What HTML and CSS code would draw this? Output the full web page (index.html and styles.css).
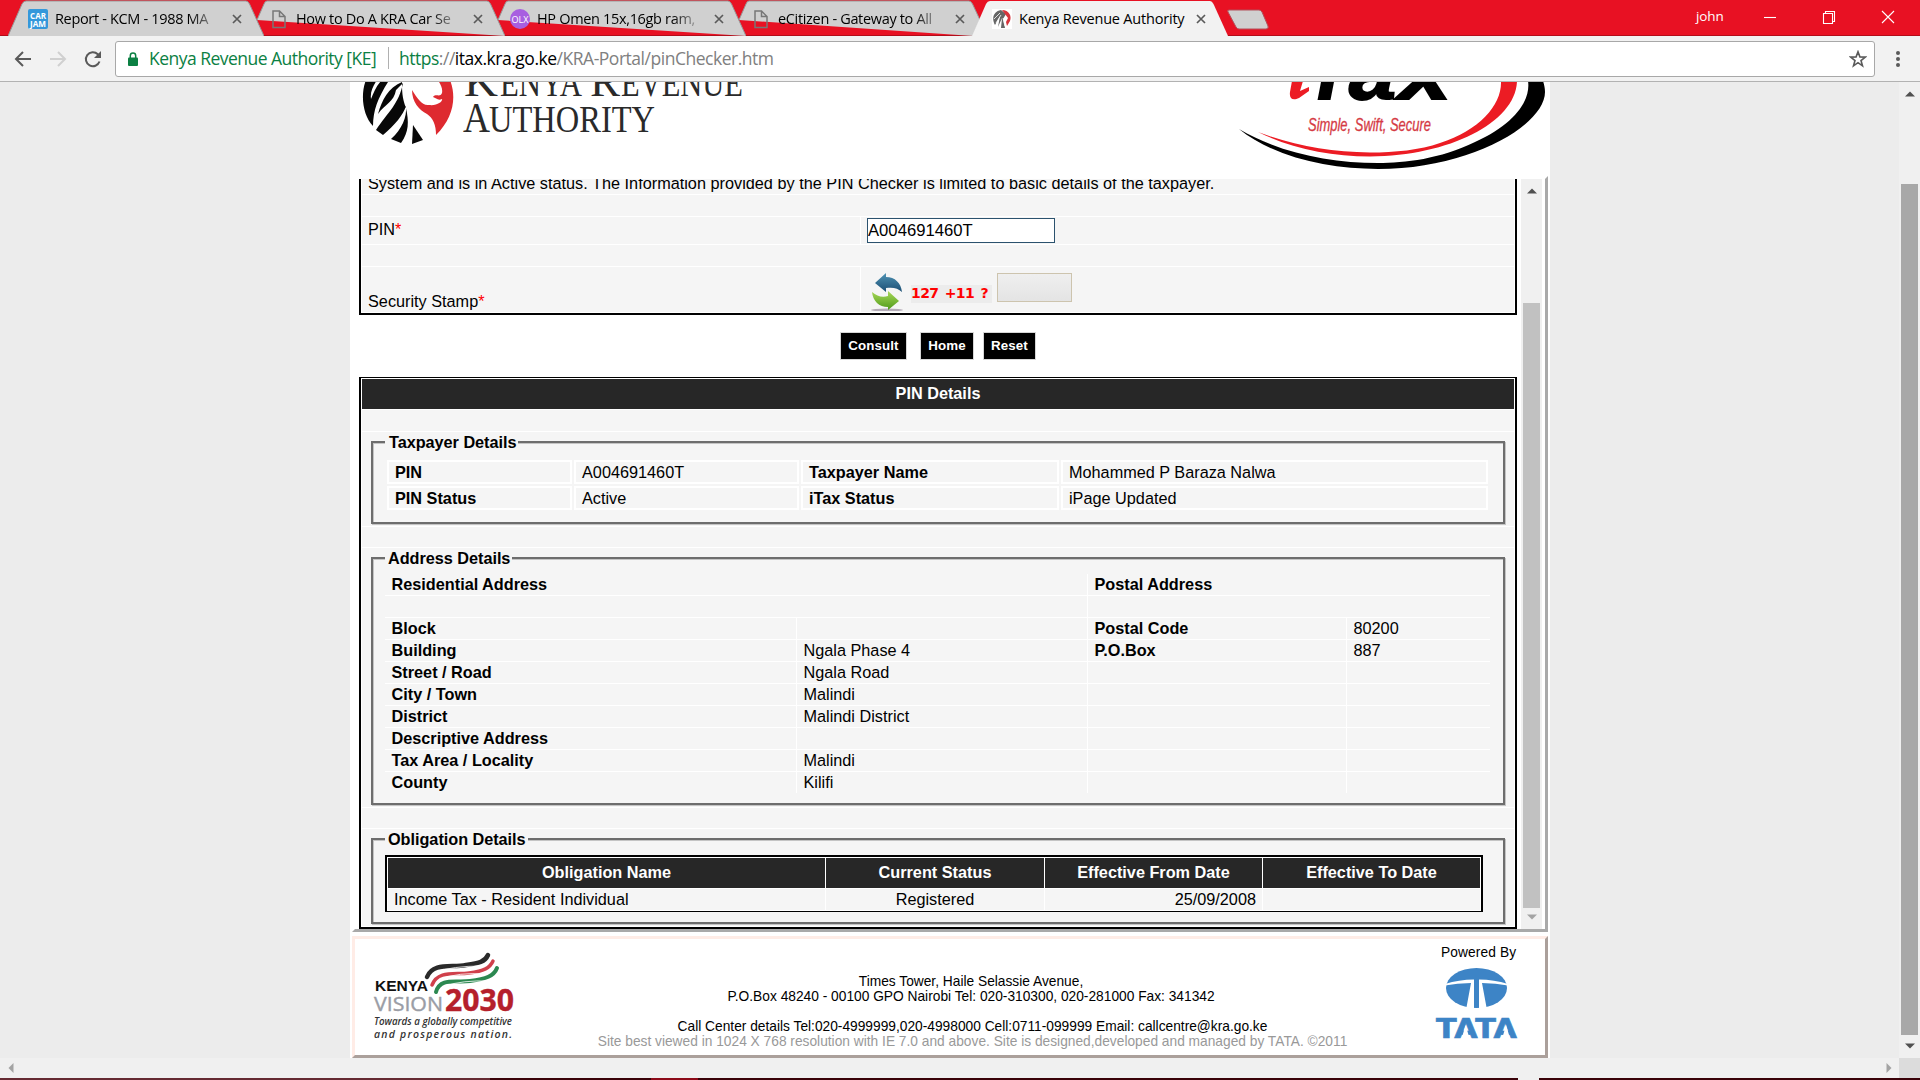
FILE: index.html
```html
<!DOCTYPE html>
<html lang="en">
<head>
<meta charset="utf-8">
<title>Kenya Revenue Authority</title>
<link rel="stylesheet" href="styles.css">
</head>
<body>
<div class="window">
  <header class="tabstrip">
    <div class="tabs">
      <div class="tab">
        <svg class="tab-shape" viewBox="0 0 256 36"><path d="M0 36 14 4Q15.500 1 18 1H238Q240 1 241.500 4L256 36"/></svg>
        <svg class="tab-icon" viewBox="0 0 20 20"><rect width="20" height="20" rx="2" fill="#3498db"/><text x="2" y="9.500" textLength="16" lengthAdjust="spacingAndGlyphs" class="jam">CAR</text><text x="2" y="17.500" textLength="16" lengthAdjust="spacingAndGlyphs" class="jam">JAM</text></svg>
        <span class="tab-title fade">Report - KCM - 1988 MA</span>
        <svg class="tab-close" viewBox="0 0 10 10"><path d="M1 1 9 9M9 1 1 9"/></svg>
      </div>
      <div class="tab">
        <svg class="tab-shape" viewBox="0 0 256 36"><path d="M8 20 15 4Q16 1 18 1H238Q240 1 241.500 4L256 36"/></svg>
        <svg class="tab-icon page" viewBox="0 0 20 20"><path class="doc" d="M4 2H10.500L16 7.500V18.500H4ZM10.500 2V7.500H16"/></svg>
        <span class="tab-title fade">How to Do A KRA Car Se</span>
        <svg class="tab-close" viewBox="0 0 10 10"><path d="M1 1 9 9M9 1 1 9"/></svg>
      </div>
      <div class="tab">
        <svg class="tab-shape" viewBox="0 0 256 36"><path d="M8 20 15 4Q16 1 18 1H238Q240 1 241.500 4L256 36"/></svg>
        <svg class="tab-icon" viewBox="0 0 20 20"><circle cx="10" cy="10" r="10" fill="#a85fe0"/><text x="1.500" y="13.500" textLength="17" lengthAdjust="spacingAndGlyphs" class="olx">OLX</text></svg>
        <span class="tab-title fade">HP Omen 15x,16gb ram,</span>
        <svg class="tab-close" viewBox="0 0 10 10"><path d="M1 1 9 9M9 1 1 9"/></svg>
      </div>
      <div class="tab">
        <svg class="tab-shape" viewBox="0 0 256 36"><path d="M8 20 15 4Q16 1 18 1H238Q240 1 241.500 4L249 20 242 36"/></svg>
        <svg class="tab-icon page" viewBox="0 0 20 20"><path class="doc" d="M4 2H10.500L16 7.500V18.500H4ZM10.500 2V7.500H16"/></svg>
        <span class="tab-title fade">eCitizen - Gateway to All</span>
        <svg class="tab-close" viewBox="0 0 10 10"><path d="M1 1 9 9M9 1 1 9"/></svg>
      </div>
      <div class="tab active">
        <svg class="tab-shape" viewBox="0 0 256 36"><path d="M0 36 14 4Q15.500 1 18 1H238Q240 1 241.500 4L256 36"/></svg>
        <svg class="tab-icon" viewBox="0 0 20 20"><rect width="20" height="20" fill="#fff"/><path d="M9 1C2 2-1 9 3 16L8 7 6 18 10 9 9 19 13 19 11 10 14 5Z" fill="#666"/><path d="M10 1C17 1 20 7 18 12L15 17 14 13 16 9 13 5Z" fill="#d8343c"/><path d="M2 10 8 4M4 14 9 6M11 9 13 17" stroke="#fff" stroke-width=".8"/></svg>
        <span class="tab-title">Kenya Revenue Authority</span>
        <svg class="tab-close" viewBox="0 0 10 10"><path d="M1 1 9 9M9 1 1 9"/></svg>
      </div>
    </div>
    <svg class="newtab" viewBox="0 0 44 22"><path d="M3 1H33Q35 1 36 3L42 17Q43 20 40 20H13Q11 20 10 18L2 3Q1 1 3 1Z"/></svg>
    <span class="user">john</span>
    <div class="winctl">
      <svg viewBox="0 0 14 14"><path d="M1 7.500H13"/></svg>
      <svg viewBox="0 0 14 14"><path d="M1.500 3.500H10.500V13.500H1.500ZM3.500 3.500V1.500H12.500V11.500H10.500"/></svg>
      <svg viewBox="0 0 14 14"><path d="M1 1 13 13M13 1 1 13"/></svg>
    </div>
  </header>

  <div class="toolbar">
    <svg class="nav" viewBox="0 0 18 18"><path d="M17 9H2M9 2 2 9 9 16"/></svg>
    <svg class="nav off" viewBox="0 0 18 18"><path d="M1 9H16M9 2 16 9 9 16"/></svg>
    <svg class="nav" viewBox="0 0 18 18"><path d="M15.500 11.500A7 7 0 1 1 13.800 4.200L16 6.500"/><path d="M17 1V8H10Z" class="solid"/></svg>
    <div class="omnibox">
      <svg class="lock" viewBox="0 0 12 14"><rect x="1" y="5.500" width="10" height="8.500" rx="1" fill="#0b8043"/><path d="M3.300 6V3.700A2.700 2.700 0 0 1 8.700 3.700V6" fill="none" stroke="#0b8043" stroke-width="1.500"/></svg>
      <span class="ev">Kenya Revenue Authority [KE]</span>
      <span class="url"><span class="secure">https</span>://<span class="host">itax.kra.go.ke</span>/KRA-Portal/pinChecker.htm</span>
      <svg class="star" viewBox="0 0 18 18"><path d="M9 1.800 10.900 6.900 16.300 7.100 12 10.500 13.500 15.800 9 12.700 4.500 15.800 6 10.500 1.700 7.100 7.100 6.900Z"/></svg>
    </div>
    <svg class="dots" viewBox="0 0 4 18"><circle cx="2" cy="3" r="2"/><circle cx="2" cy="9" r="2"/><circle cx="2" cy="15" r="2"/></svg>
  </div>

  <div class="viewport">
    <main class="site">
      <div class="masthead">
        <svg class="kra" viewBox="350 82 420 94">
          <g fill="#080808">
            <path d="M366 80C360 95 363 116 373 126C373 110 378 98 388 82L382 80C376 86 374 92 371 99C370 92 373 86 377 80Z"/>
            <path d="M402 82C388 88 382 100 378 114C385 104 394 102 396 90L403 83C399 104 388 112 376 130L383 135C395 125 403 115 406 106C407 117 402 129 391 139L401 143C409 132 409 122 406 108C402 98 402 90 402 82Z"/>
            <path d="M413 125 423 140 412 144Z"/>
          </g>
          <path d="M450 80C457 98 453 118 436 135C436 125 433 118 427 114C419 110 412 102 412 90C417 98 422 106 429 105C438 106 443 101 442 99C438 101 436 98 433 97C436 93 440 98 442 93C443 88 440 84 438 80Z" fill="#de2a30"/>
          <text class="kra-name" y="95.500"><tspan x="464" font-size="42" textLength="34" lengthAdjust="spacingAndGlyphs">K</tspan><tspan x="500" font-size="37" textLength="82" lengthAdjust="spacingAndGlyphs">ENYA</tspan><tspan x="590" font-size="42" textLength="30" lengthAdjust="spacingAndGlyphs">R</tspan><tspan x="621" font-size="37" textLength="122" lengthAdjust="spacingAndGlyphs">EVENUE</tspan></text>
          <text class="kra-name" y="131.500"><tspan x="463" font-size="42" textLength="27" lengthAdjust="spacingAndGlyphs">A</tspan><tspan x="489" font-size="38" textLength="166" lengthAdjust="spacingAndGlyphs">UTHORITY</tspan></text>
        </svg>
        <svg class="itax" viewBox="1230 82 320 94">
          <path d="M1239 129C1275 158 1330 169 1378 169C1470 169 1545 125 1545 92C1545 88 1544 84 1543 81H1528C1531 100 1515 124 1475 142C1440 159 1405 163 1378 163C1330 163 1280 153 1239 129Z" fill="#000"/>
          <path d="M1258 132C1290 148 1330 156.500 1370 156.500C1450 156 1516 122 1517 81H1501C1502 105 1480 130 1440 143C1420 150 1395 152.500 1370 152.500C1330 152 1295 146 1258 132Z" fill="#ec1c24"/>
          <path d="M1292 81 1290 92C1289 99 1293 101 1299 98L1309 91 1309 87 1300 91 1303 81Z" fill="#ec1c24"/>
          <text class="itax-name" y="99"><tspan x="1305">T</tspan><tspan x="1349" textLength="47" lengthAdjust="spacingAndGlyphs">a</tspan><tspan x="1399" textLength="52" lengthAdjust="spacingAndGlyphs">x</tspan></text>
          <text class="motto" x="1308" y="131" textLength="123" lengthAdjust="spacingAndGlyphs">Simple, Swift, Secure</text>
        </svg>
      </div>

      <div class="frame">
        <div class="content">
          <section class="form">
            <div class="row clipped"><p>System and is in Active status. The Information provided by the PIN Checker is limited to basic details of the taxpayer.</p></div>
            <div class="row"></div>
            <div class="row split"><label>PIN<i>*</i></label><div class="field"><input class="pin" type="text" value="A004691460T"></div></div>
            <div class="row"></div>
            <div class="row split stamp"><label>Security Stamp<i>*</i></label><div class="field">
              <svg class="refresh" viewBox="0 0 34 38"><defs><linearGradient id="b" x2="0" y2="1"><stop offset="0" stop-color="#4f93b4"/><stop offset="1" stop-color="#1c4f74"/></linearGradient><linearGradient id="g" x2="0" y2="1"><stop offset="0" stop-color="#a8d858"/><stop offset="1" stop-color="#4f9a1a"/></linearGradient></defs><ellipse cx="17" cy="37" rx="16" ry="1.500" fill="#b5acb8"/><path d="M5 10 16 0V4C25 4 31 10 32 19C28 15 23 14 16 15V19Z" fill="url(#b)"/><path d="M29 28 18 37V34C9 34 3 28 2 19C7 23 12 25 18 23V18Z" fill="url(#g)"/></svg>
              <span class="captcha"><b>127</b><b>+11</b><b>?</b></span>
              <span class="answer"></span>
            </div></div>
          </section>

          <div class="actions"><button>Consult</button><button>Home</button><button>Reset</button></div>

          <section class="details">
            <h2>PIN Details</h2>
            <div class="row"></div>
            <div class="row g1"><div class="group">
              <span class="legend">Taxpayer Details</span>
              <div class="taxpayer">
                <b>PIN</b><span>A004691460T</span><b>Taxpayer Name</b><span>Mohammed P Baraza Nalwa</span>
                <b>PIN Status</b><span>Active</span><b>iTax Status</b><span>iPage Updated</span>
              </div>
            </div></div>
            <div class="row"></div>
            <div class="row g2"><div class="group">
              <span class="legend">Address Details</span>
              <div class="address">
                <b class="wide">Residential Address</b><b class="wide">Postal Address</b>
                <span class="wide"></span><span class="wide"></span>
                <b>Block</b><span></span><b>Postal Code</b><span>80200</span>
                <b>Building</b><span>Ngala Phase 4</span><b>P.O.Box</b><span>887</span>
                <b>Street / Road</b><span>Ngala Road</span><b></b><span></span>
                <b>City / Town</b><span>Malindi</span><b></b><span></span>
                <b>District</b><span>Malindi District</span><b></b><span></span>
                <b>Descriptive Address</b><span></span><b></b><span></span>
                <b>Tax Area / Locality</b><span>Malindi</span><b></b><span></span>
                <b>County</b><span>Kilifi</span><b></b><span></span>
              </div>
            </div></div>
            <div class="row"></div>
            <div class="row g3"><div class="group">
              <span class="legend">Obligation Details</span>
              <div class="obligations">
                <b>Obligation Name</b><b>Current Status</b><b>Effective From Date</b><b>Effective To Date</b>
                <span>Income Tax - Resident Individual</span><span class="mid">Registered</span><span class="end">25/09/2008</span><span></span>
              </div>
            </div></div>
          </section>
        </div>
        <div class="scroll inner">
          <svg viewBox="0 0 10 6"><path d="M0 5.500 5 .500 10 5.500Z"/></svg>
          <div class="thumb"></div>
          <svg class="dim" viewBox="0 0 10 6"><path d="M0 .500 5 5.500 10 .500Z"/></svg>
        </div>
      </div>

      <footer class="foot">
        <svg class="vision" viewBox="372 948 146 96">
          <g fill="none" stroke-linecap="round">
            <path d="M427 977C433 962 452 968 466 965C479 963 485 962 488 955" stroke="#2a2a2a" stroke-width="4.500"/>
            <path d="M432 985C438 970 455 975 469 973C484 971 490 968 493 961" stroke="#d0404b" stroke-width="3.500"/>
            <path d="M436 992C440 977 456 983 470 981C486 979 494 976 497 968" stroke="#2b8850" stroke-width="4"/>
            <path d="M436 972Q452 966 482 966M441 979Q458 972 486 974M445 986Q462 980 490 981" stroke="#fff" stroke-width=".800"/>
          </g>
          <text x="375" y="990.500" class="v-kenya" textLength="53" lengthAdjust="spacingAndGlyphs">KENYA</text>
          <text x="374" y="1010.500" class="v-vision" textLength="69" lengthAdjust="spacingAndGlyphs">VISION</text>
          <text x="445" y="1010.500" class="v-year" textLength="69" lengthAdjust="spacingAndGlyphs">2030</text>
          <text x="374" y="1025" class="v-tag" textLength="138" lengthAdjust="spacingAndGlyphs">Towards a globally competitive</text>
          <text x="374" y="1037.500" class="v-tag" textLength="138">and prosperous nation.</text>
        </svg>
        <div class="contact">
          <p>Times Tower, Haile Selassie Avenue,</p>
          <p>P.O.Box 48240 - 00100 GPO Nairobi Tel: 020-310300, 020-281000 Fax: 341342</p>
          <p class="gap">Call Center details Tel:020-4999999,020-4998000 Cell:0711-099999 Email: callcentre@kra.go.ke</p>
          <p class="credit">Site best viewed in 1024 X 768 resolution with IE 7.0 and above. Site is designed,developed and managed by TATA. ©2011</p>
        </div>
        <div class="powered">
          <span>Powered By</span>
          <svg viewBox="1434 966 84 74">
            <ellipse cx="1476.500" cy="988" rx="30.500" ry="20" fill="#3d84c6"/>
            <path d="M1445 984Q1459 979.500 1474 979.500V1010H1466L1471 983Q1457 983 1445 985.500ZM1508 984Q1494 979.500 1479 979.500V1010H1487L1482 983Q1496 983 1508 985.500Z" fill="#fff"/>
            <text x="1436" y="1037.500" class="tata" textLength="81" lengthAdjust="spacingAndGlyphs">TATA</text>
            <path d="M1461.500 1039 1465.600 1025 1469.700 1039ZM1502 1039 1506.100 1025 1510.200 1039Z" fill="#fff"/>
          </svg>
        </div>
      </footer>
    </main>
    <div class="scroll outer">
      <svg viewBox="0 0 10 6"><path d="M0 5.500 5 .500 10 5.500Z"/></svg>
      <div class="thumb"></div>
      <svg viewBox="0 0 10 6"><path d="M0 .500 5 5.500 10 .500Z"/></svg>
    </div>
  </div>
  <div class="hscroll">
    <svg viewBox="0 0 6 10"><path d="M5.500 0 .500 5 5.500 10Z"/></svg>
    <svg viewBox="0 0 6 10"><path d="M.500 0 5.500 5 .500 10Z"/></svg>
    <div class="corner"></div>
  </div>
  <div class="taskbar"><i></i><i></i><i></i><i></i><i></i><i></i></div>
</div>
</body>
</html>
```
FILE: styles.css
```css
* { box-sizing: border-box; }
body { margin: 0; overflow: hidden; font-family: "Liberation Sans", Arial, sans-serif; color: #000; }
p, h2 { margin: 0; }
svg { display: block; flex: none; }
.window { display: flex; flex-direction: column; width: 1920px; height: 1080px; }

/* browser tabs */
.tabstrip { display: flex; height: 36px; padding-left: 8px; background: #e81123; border-bottom: 1px solid #b30d1a; font-family: "Open Sans", sans-serif; }
.tabs { display: flex; width: 1221px; flex: none; }
.tab { position: relative; display: flex; align-items: center; width: 256px; height: 36px; margin-right: -15px; padding: 2px 0 0 20px; flex: none; }
.tab.active { z-index: 1; }
.tab-shape { position: absolute; left: 0; top: 0; width: 256px; height: 36px; fill: #d0d0d0; stroke: #999; }
.active .tab-shape { fill: #f2f2f2; stroke: none; }
.tab-icon { position: relative; width: 20px; height: 20px; }
.tab-title { position: relative; width: 169px; margin-left: 7px; font-size: 14.500px; letter-spacing: -.2px; white-space: nowrap; line-height: 24px; }
.fade { letter-spacing: -.33px; -webkit-mask-image: linear-gradient(90deg, #000 80%, transparent 99%); mask-image: linear-gradient(90deg, #000 80%, transparent 99%); }
.tab-close { position: relative; width: 10px; height: 10px; margin-left: 8px; stroke: #5a5a5a; stroke-width: 1.700; }
.doc { fill: none; stroke: #777; stroke-width: 1.500; }
.jam { font: bold 8.500px "Open Sans", sans-serif; fill: #fff; }
.olx { font: 9.500px "Open Sans", sans-serif; fill: #fff; }
.newtab { width: 44px; height: 22px; margin: 9px 0 0 -3px; fill: #d0d0d0; stroke: #b3505a; }
.user { margin: 5px 0 0 426px; width: 67px; font-size: 13.500px; line-height: 22px; color: #fff; letter-spacing: -.1px; }
.winctl { display: flex; gap: 45px; padding-top: 10px; }
.winctl svg { width: 14px; height: 14px; fill: none; stroke: #fff; stroke-width: 1.100; }

/* address bar */
.toolbar { display: flex; align-items: center; height: 46px; padding-left: 14px; background: #f2f2f2; border-bottom: 1px solid #b2b2b2; flex: none; }
.nav { width: 18px; height: 18px; margin-right: 17px; fill: none; stroke: #5a5a5a; stroke-width: 2; }
.nav.off { stroke: #d0d0d0; }
.solid { fill: #5a5a5a; stroke: none; }
.omnibox { display: flex; align-items: center; width: 1760px; height: 36px; margin-left: -4px; padding: 0 7px 0 11px; background: #fff; border: 1px solid #a8a8a8; border-radius: 3px; font: 17.500px "Open Sans", sans-serif; letter-spacing: -.48px; white-space: nowrap; flex: none; }
.lock { width: 12px; height: 14px; margin-right: 10px; }
.ev { width: 240px; border-right: 1px solid #b0b0b0; color: #0b8043; line-height: 22px; letter-spacing: -.52px; }
.ev, .url { margin-top: -1px; }
.url { margin-left: 10px; color: #808080; }
.secure { color: #0b8043; }
.host { color: #000; }
.star { width: 18px; height: 18px; margin-left: auto; fill: none; stroke: #5a5a5a; stroke-width: 1.600; }
.dots { width: 4px; height: 18px; margin-left: 21px; fill: #5a5a5a; }

/* page area */
.viewport { display: flex; height: 976px; background: #ececec; padding-left: 350px; flex: none; }
.site { display: flex; flex-direction: column; width: 1200px; height: 976px; padding: 0 2px; background: #fff; }
.masthead { display: flex; justify-content: space-between; height: 94px; margin: 0 -2px; flex: none; }
.kra { width: 420px; height: 94px; }
.itax { width: 320px; height: 94px; }
.kra-name { font-family: "Liberation Serif", serif; fill: #2a2a2a; }
.itax-name { font: italic bold 76px "Liberation Sans", sans-serif; fill: #000; stroke: #000; stroke-width: 2; }
.motto { font: italic 17.500px "Liberation Sans", sans-serif; fill: #d53a44; stroke: #d53a44; stroke-width: .3; }

.frame { display: flex; height: 756px; border: 3px solid; border-color: #fff #a9a9a9 #a9a9a9 #fff; flex: none; }
.content { width: 1158px; margin: 0 4px; font-size: 16.250px; line-height: 21px; flex: none; }
.row { background: #f5f5f5; }
.form { display: grid; grid-template-rows: 15px 21px 27px 21px 45px; row-gap: 1px; height: 136px; padding: 0 1px 1px; border: solid #000; border-width: 0 2px 2px; background: #fff; }
.clipped { display: flex; align-items: flex-end; overflow: hidden; padding-left: 6px; white-space: nowrap; }
.clipped p { flex: none; letter-spacing: .01px; }
.split { display: grid; grid-template-columns: 498px 1fr; column-gap: 1px; background: #fff; }
.split label, .field { background: #f5f5f5; padding-left: 6px; }
.split label { padding-top: 2px; }
.split i { color: #f00; font-style: normal; }
.stamp label { padding-top: 24px; }
.pin { width: 188px; height: 25px; margin-top: 1px; padding: 0; border: 1px solid #2b526e; background: #fff; font: 16.670px "Liberation Sans", sans-serif; border-radius: 0; }
.field { display: flex; }
.refresh { width: 34px; height: 38px; margin: 6px 0 0 3px; }
.captcha { display: flex; justify-content: space-between; width: 81px; height: 18px; margin: 18px 0 0 7px; padding: 1px 4px 0 0; background: #ececec; color: #f00; font: bold 14px/15px "DejaVu Sans", sans-serif; letter-spacing: -.6px; }
.answer { width: 75px; height: 29px; margin: 6px 0 0 5px; border: 1px solid #cdc4ae; background: linear-gradient(#efefef, #e4e4e4); }

.actions { display: flex; height: 62px; padding: 17px 0 0 481px; }
.actions button { height: 28px; padding: 0 7px 2px; margin: 0 9px 0 0; width: 53px; border: 1px solid #d6d6d6; background: #000; color: #fff; font: bold 13.330px "Liberation Sans", sans-serif; letter-spacing: .1px; white-space: nowrap; }
.actions button:first-child { width: 67px; margin-right: 13px; }
.actions button:nth-child(2) { width: 54px; }

.details { display: grid; grid-template-rows: 30px 21px 94px 20px 259px 20px 97px; row-gap: 1px; height: 552px; padding: 1px; border: solid #000; border-width: 1px 2px 2px; background: #fff; }
.details h2 { background: #272727; color: #fff; font-size: 16.250px; line-height: 29px; text-align: center; }
.group { position: relative; width: 1134px; margin: 9px 0 0 9px; border: 2px solid #6d6d6d; box-shadow: 1px 1px 0 #c4c4c4, inset 1px 1px 0 #c4c4c4; }
.legend { position: absolute; left: 12px; top: -11px; padding: 0 2px 0 3px; background: #f5f5f5; font-weight: bold; letter-spacing: -.03px; }
.g1 .group { height: 83px; padding: 17px 0 0 14px; }
.g1 .legend { padding-left: 4px; }
.g2 .group { height: 248px; padding: 15px 0 0 12px; }
.g3 .group { height: 86px; padding: 15px 0 0 12px; }
.taxpayer { display: grid; grid-template-columns: 185px 225px 258px 427px; grid-auto-rows: 24px; gap: 2px; }
.taxpayer > * { border: 2px solid #fff; padding-left: 6px; line-height: 21px; }
.address { display: grid; grid-template-columns: 411px 290px 258px 143px; grid-auto-rows: 21px; gap: 1px; width: 1105px; background: #fff; }
.address > * { background: #f5f5f5; padding-left: 6.500px; }
.wide { grid-column: span 2; }
.obligations { display: grid; grid-template-columns: 437px 218px 217px 217px; grid-template-rows: 30px 21px; gap: 1px; width: 1098px; height: 57px; padding: 1px; border: solid #000; border-width: 2px 2px 1px; background: #fff; }
.obligations b { background: #272727; color: #fff; text-align: center; line-height: 29px; }
.obligations span { background: #f5f5f5; padding: 0 6px; }
.obligations .mid { text-align: center; }
.obligations .end { text-align: right; }

/* scrollbars */
.scroll { display: flex; flex-direction: column; align-items: center; background: #f0f0f0; flex: none; }
.scroll svg, .hscroll svg { width: 10px; height: 6px; fill: #505050; }
.scroll .dim { fill: #a3a3a3; }
.inner { width: 21px; height: 750px; padding: 9px 0; }
.inner .thumb { width: 17px; height: 605px; margin: 109px 0 6px; background: #c1c1c1; }
.outer { width: 21px; height: 976px; margin-left: auto; padding: 9px 0; }
.outer .thumb { width: 17px; height: 851px; margin: 87px 0 8px; background: #a8a8a8; }
.hscroll { display: flex; align-items: center; justify-content: space-between; height: 20px; padding-left: 8px; background: #f0f0f0; flex: none; }
.hscroll svg { width: 6px; height: 10px; fill: #a3a3a3; }
.hscroll svg:nth-child(2) { margin: 0 7px 0 auto; }
.corner { width: 21px; height: 20px; background: #dcdcdc; }
.taskbar { display: grid; grid-template-columns: 490px 161px 47px 820px 21px 381px; height: 2px; flex: none; }
.taskbar i { background: #3a0209; }
.taskbar i:nth-child(1) { background: #652a32; }
.taskbar i:nth-child(3) { background: #8c0a18; }
.taskbar i:nth-child(5) { background: #f0f0f0; }

/* page footer */
.foot { display: flex; height: 122px; margin-top: 4px; border: 3px solid; border-color: #ffece6 #aba09b #aba09b #ffece6; flex: none; }
.vision { width: 146px; height: 96px; margin: 9px 0 0 17px; }
.contact { width: 906px; padding-top: 35px; text-align: center; font-size: 13.750px; line-height: 15px; white-space: nowrap; flex: none; }
.contact .gap { margin-top: 15px; padding-left: 3px; }
.contact .credit { color: #999; padding-left: 3px; }
.powered { display: flex; flex-direction: column; width: 84px; margin-left: 10px; padding-top: 5px; font-size: 13.750px; line-height: 18px; white-space: nowrap; }
.powered span { padding-left: 7px; letter-spacing: .1px; }
.powered svg { width: 84px; height: 74px; margin-top: 4px; }
.v-kenya { font: bold 14px "Liberation Sans", sans-serif; fill: #111; }
.v-vision { font: 20px "Open Sans", sans-serif; fill: #9a9da5; stroke: #9a9da5; stroke-width: .4; }
.v-year { font: bold 31px "Open Sans", sans-serif; fill: #b5202b; stroke: #b5202b; stroke-width: .4; }
.v-tag { font: italic 600 10.500px "Open Sans", sans-serif; fill: #333; }
.tata { font: bold 26px "DejaVu Sans", sans-serif; fill: #3d84c6; stroke: #3d84c6; stroke-width: .6; }
```
